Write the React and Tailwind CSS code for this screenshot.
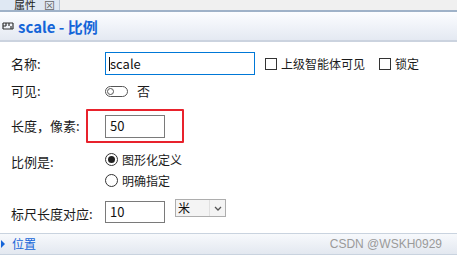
import React from 'react'

const font = { fontFamily: '"Noto Sans CJK SC", "Noto Sans", sans-serif' }

function Label({ children }) {
  return <div className="w-[105px] shrink-0 pl-[11px] text-[13px] text-[#1b1b1b]">{children}</div>
}

function Check({ label }) {
  return (
    <div className="flex items-center gap-[4px]">
      <span className="w-[12px] h-[12px] border border-[#333] bg-white" />
      <span className="text-[12px] text-[#1b1b1b]">{label}</span>
    </div>
  )
}

function Radio({ checked, label }) {
  return (
    <div className="flex items-center gap-[4px] h-[21px]">
      <span className="w-[13px] h-[13px] rounded-full border border-[#333] bg-white flex items-center justify-center">
        {checked && <span className="w-[7px] h-[7px] rounded-full bg-[#222]" />}
      </span>
      <span className="text-[12px] text-[#1b1b1b]">{label}</span>
    </div>
  )
}

export default function App() {
  return (
    <div className="w-[457px] h-[259px] bg-white overflow-hidden flex flex-col" style={font}>
      {/* tab strip */}
      <div className="h-[10px] flex bg-[#f0f0f0] border-b-[2px] border-[#9fb2c8] shrink-0 box-content">
        <div className="w-[60px] bg-[#dfe8f3] border-r border-[#b9c6d6] flex items-end pl-[14px] text-[11px] leading-[10px] text-[#222] overflow-hidden">
          属性 <span className="ml-[8px] text-[#666]">⊠</span>
        </div>
      </div>

      {/* title bar */}
      <div className="h-[30px] shrink-0 flex items-center gap-[4px] pl-[2px] bg-gradient-to-b from-[#fcfdff] to-[#e4e9f2] border-b-[2px] border-[#cbd3df]">
        <svg width="12" height="12" viewBox="0 0 12 12" className="shrink-0">
          <path d="M1 3h10M1 9h10M1 3v6M11 3v6M4 3v3M7 3v3M9 6v3M1 6h3" stroke="#333" strokeWidth="1.2" fill="none" />
        </svg>
        <span className="text-[15px] font-bold text-[#1565d8] leading-none">scale - 比例</span>
      </div>

      {/* form */}
      <div className="flex-1 flex flex-col pt-[10px]">
        <div className="flex items-center h-[23px]">
          <Label>名称:</Label>
          <div className="w-[150px] h-[23px] border border-[#0078d7] flex items-center pl-[3px] text-[13px] text-[#111]">
            <span className="w-px h-[14px] bg-[#111]" />scale
          </div>
          <div className="ml-[10px] flex items-center gap-[14px]">
            <Check label="上级智能体可见" />
            <Check label="锁定" />
          </div>
        </div>

        <div className="flex items-center h-[22px] mt-[5px]">
          <Label>可见:</Label>
          <span className="w-[23px] h-[11px] rounded-full border border-[#555] bg-white flex items-center pl-[1px]">
            <span className="w-[7px] h-[7px] rounded-full border border-[#555]" />
          </span>
          <span className="ml-[9px] text-[13px] text-[#1b1b1b]">否</span>
        </div>

        <div className="flex items-center h-[34px] mt-[7px] relative">
          <Label>长度，像素:</Label>
          <div className="w-[60px] h-[23px] border border-[#7a7a7a] flex items-center pl-[4px] text-[13px] text-[#111]">50</div>
          <div className="absolute left-[86px] top-0 w-[98px] h-[34px] border-[2px] border-[#e8222c] rounded-[1px]" />
        </div>

        <div className="flex mt-[6px]">
          <div className="pt-[3px]"><Label>比例是:</Label></div>
          <div className="flex flex-col">
            <Radio checked label="图形化定义" />
            <Radio label="明确指定" />
          </div>
        </div>

        <div className="flex items-start mt-[10px]">
          <div className="pt-[3px]"><Label>标尺长度对应:</Label></div>
          <div className="w-[60px] h-[22px] border border-[#7a7a7a] flex items-center pl-[4px] text-[13px] text-[#111]">10</div>
          <div className="ml-[10px] -mt-[2px] w-[51px] h-[18px] border border-[#adadad] bg-[#f4f4f4] flex items-center">
            <span className="flex-1 pl-[2px] text-[12px] leading-none text-[#111]">米</span>
            <span className="w-[16px] h-full border-l border-[#e0e0e0] flex items-center justify-center">
              <svg width="8" height="5" viewBox="0 0 8 5"><path d="M1 1l3 3 3-3" stroke="#555" strokeWidth="1.3" fill="none" /></svg>
            </span>
          </div>
        </div>
      </div>

      {/* section bar */}
      <div className="h-[22px] shrink-0 mb-[4px] flex items-center bg-gradient-to-b from-[#f7f9fc] to-[#e3e8f0] border-t border-b border-[#c9d3df]">
        <span className="w-0 h-0 border-y-[4px] border-y-transparent border-l-[4px] border-l-[#1565d8] ml-[1px]" />
        <span className="ml-[7px] text-[12px] text-[#1565d8]">位置</span>
        <span className="ml-auto mr-[15px] text-[12px] text-[#9a9a9a]" style={{ fontFamily: '"Liberation Sans", Arial, sans-serif' }}>CSDN @WSKH0929</span>
      </div>
    </div>
  )
}
